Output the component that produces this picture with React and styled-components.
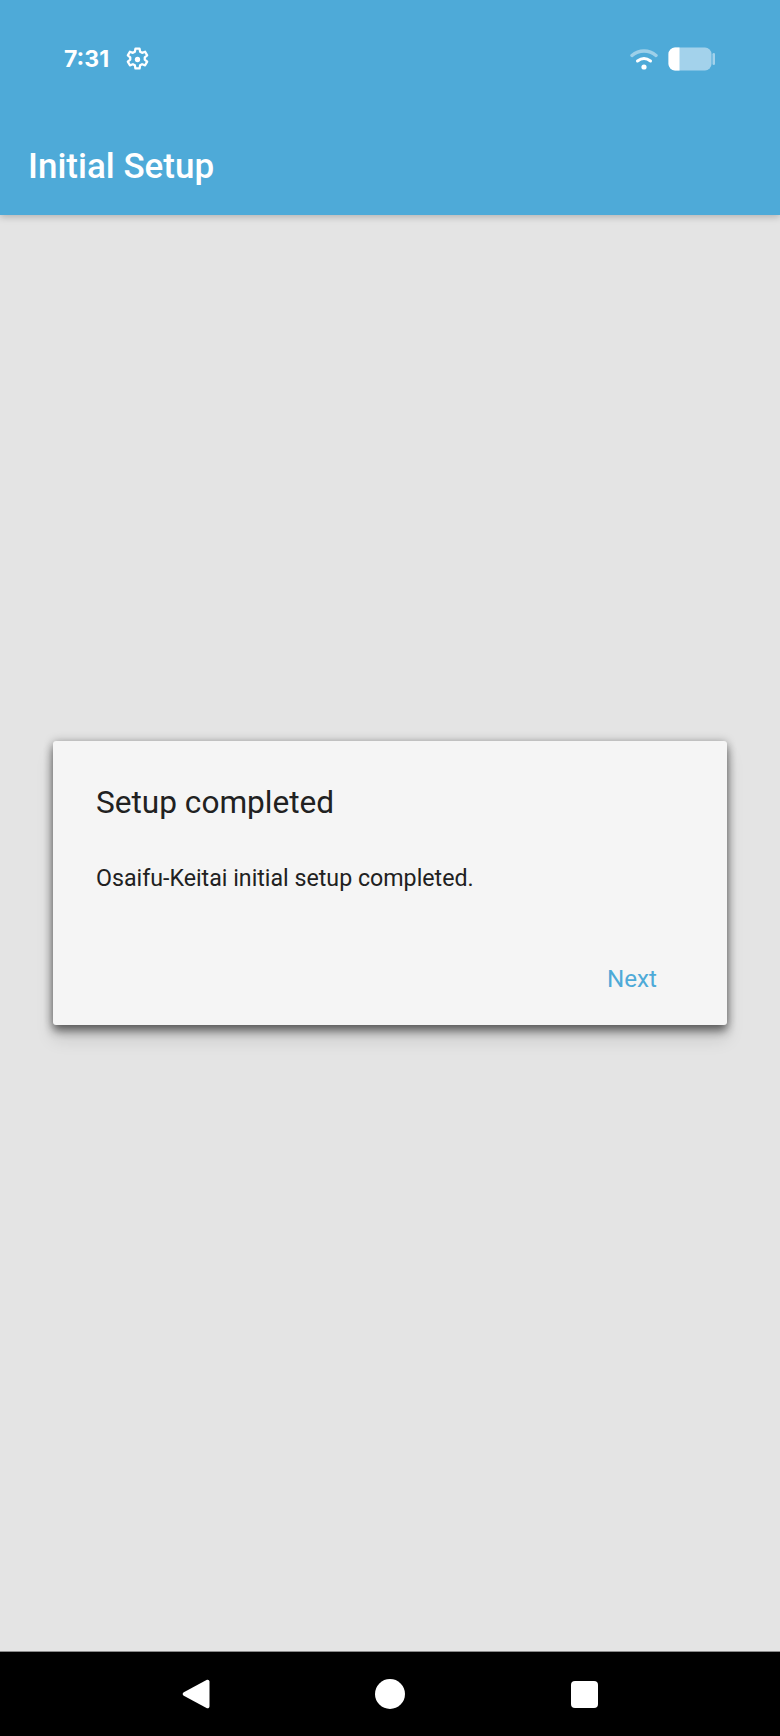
import React from "react";
import styled, { createGlobalStyle } from "styled-components";

const GlobalStyle = createGlobalStyle`
  html, body {
    margin: 0;
    padding: 0;
    background: #e4e4e4;
  }
  body {
    font-family: Roboto, "Liberation Sans", sans-serif;
  }
`;

const Screen = styled.div`
  width: 780px;
  height: 1736px;
  display: flex;
  flex-direction: column;
  overflow: hidden;
  background: #e4e4e4;
`;

const Header = styled.header`
  height: 215px;
  flex: none;
  display: flex;
  flex-direction: column;
  background: #4eaad8;
  box-shadow: 0 2px 7px rgba(0, 0, 0, 0.22);
  position: relative;
  z-index: 1;
`;

const StatusBar = styled.div`
  height: 118px;
  flex: none;
  display: flex;
  align-items: center;
  justify-content: space-between;
  padding: 0 65px 0 64px;
  box-sizing: border-box;
`;

const StatusGroup = styled.div`
  display: flex;
  align-items: center;
  gap: ${(p) => p.$gap}px;
`;

const Clock = styled.span`
  font-family: Inter, Roboto, sans-serif;
  font-size: 23px;
  font-weight: 700;
  color: #fff;
`;

const Title = styled.h1`
  margin: 25px 0 0;
  padding-left: 28px;
  font-size: 35px;
  line-height: 48px;
  font-weight: 500;
  color: #fff;
`;

const Content = styled.main`
  flex: 1;
  display: flex;
  align-items: flex-start;
  justify-content: center;
  padding-top: 526px;
`;

const Dialog = styled.section`
  width: 674px;
  height: 284px;
  box-sizing: border-box;
  padding: 42px 43px 0;
  display: flex;
  flex-direction: column;
  background: #f5f5f5;
  border-radius: 3px;
  box-shadow: 0 6px 10px rgba(0, 0, 0, 0.48), 0 14px 18px rgba(0, 0, 0, 0.12),
    0 0 10px rgba(0, 0, 0, 0.25);
`;

const DialogTitle = styled.h2`
  margin: 0;
  font-size: 31.6px;
  line-height: 40px;
  font-weight: 400;
  color: #212121;
`;

const DialogText = styled.p`
  margin: 37px 0 0;
  font-size: 23.2px;
  line-height: 36px;
  font-weight: 400;
  color: #212121;
`;

const DialogActions = styled.div`
  margin-top: 65px;
  display: flex;
  justify-content: flex-end;
  padding-right: 27px;
`;

const TextButton = styled.button`
  padding: 0;
  border: none;
  background: none;
  font-family: inherit;
  font-size: 24.2px;
  line-height: 36px;
  color: #4eaad8;
`;

const NavBar = styled.nav`
  height: 85px;
  flex: none;
  background: #000;
  border-top: 1px solid #8a8a8a;
  box-sizing: border-box;
  display: flex;
  align-items: center;
  justify-content: center;
  gap: 164px;
`;

const NavSlot = styled.div`
  width: 30px;
  height: 30px;
  display: flex;
  align-items: center;
  justify-content: center;
`;

const HomeDot = styled.div`
  width: 30px;
  height: 30px;
  border-radius: 50%;
  background: #fff;
`;

const RecentSquare = styled.div`
  width: 27px;
  height: 27px;
  border-radius: 4px;
  background: #fff;
`;

const GearIcon = () => (
  <svg width="29" height="29" viewBox="0 0 24 24" fill="none" stroke="#fff" strokeWidth="1.9">
    <path d="M10.3 3h3.4l.5 2.6 1.6.9 2.5-.9 1.7 3-2 1.7v1.8l2 1.7-1.7 3-2.5-.9-1.6.9-.5 2.6h-3.4l-.5-2.6-1.6-.9-2.5.9-1.7-3 2-1.7v-1.8l-2-1.7 1.7-3 2.5.9 1.6-.9z" strokeLinejoin="round" />
    <circle cx="12" cy="12" r="2.2" fill="#fff" stroke="none" />
  </svg>
);

const WifiIcon = () => (
  <svg width="28" height="22" viewBox="0 0 28 22" fill="none" strokeLinecap="round">
    <path d="M2 7.5C9 1.5 19 1.5 26 7.5" stroke="#fff" strokeOpacity="0.45" strokeWidth="3.4" />
    <path d="M7.5 13c4-3 9-3 13 0" stroke="#fff" strokeWidth="3" />
    <circle cx="14" cy="19" r="2.6" fill="#fff" />
  </svg>
);

const BatteryIcon = () => (
  <svg width="47" height="24" viewBox="0 0 47 24">
    <rect x="0.5" y="0.5" width="43" height="23" rx="6.5" fill="#a3d2eb" />
    <path d="M7 0.5h4.5v23H7a6.5 6.5 0 0 1-6.5-6.5V7A6.5 6.5 0 0 1 7 0.5z" fill="#fff" />
    <rect x="44.5" y="6" width="2.5" height="12" rx="1.25" fill="#a3d2eb" />
  </svg>
);

const BackIcon = () => (
  <svg width="28" height="30" viewBox="0 0 28 30">
    <path d="M24.5 1c1.5-.8 3 .2 3 1.8v24.400c0 1.600-1.500 2.600-3 1.800L1.800 16.800c-1.500-.9-1.500-2.700 0-3.600z" fill="#fff" />
  </svg>
);

const App = () => {
  return (
    <Screen>
      <GlobalStyle />
      <Header>
        <StatusBar>
          <StatusGroup $gap={14}>
            <Clock>7:31</Clock>
            <GearIcon />
          </StatusGroup>
          <StatusGroup $gap={10}>
            <WifiIcon />
            <BatteryIcon />
          </StatusGroup>
        </StatusBar>
        <Title>Initial Setup</Title>
      </Header>
      <Content>
        <Dialog>
          <DialogTitle>Setup completed</DialogTitle>
          <DialogText>Osaifu-Keitai initial setup completed.</DialogText>
          <DialogActions>
            <TextButton>Next</TextButton>
          </DialogActions>
        </Dialog>
      </Content>
      <NavBar>
        <NavSlot><BackIcon /></NavSlot>
        <NavSlot><HomeDot /></NavSlot>
        <NavSlot><RecentSquare /></NavSlot>
      </NavBar>
    </Screen>
  );
};

export default App;
